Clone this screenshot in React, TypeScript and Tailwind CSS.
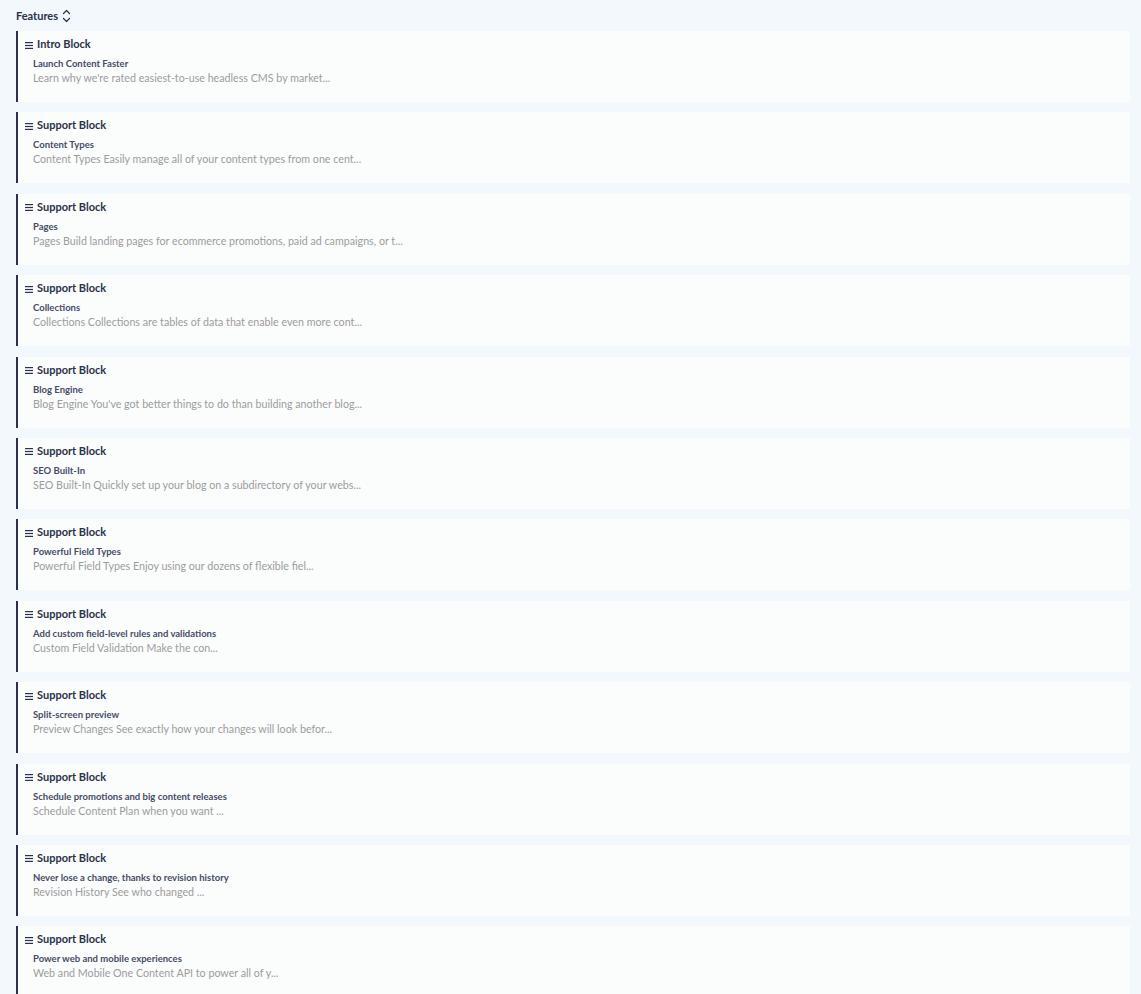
type Block = { kind: string; title: string; body: string };

const blocks: Block[] = [
  { kind: "Intro Block", title: "Launch Content Faster", body: "Learn why we're rated easiest-to-use headless CMS by market..." },
  { kind: "Support Block", title: "Content Types", body: "Content Types Easily manage all of your content types from one cent..." },
  { kind: "Support Block", title: "Pages", body: "Pages Build landing pages for ecommerce promotions, paid ad campaigns, or t..." },
  { kind: "Support Block", title: "Collections", body: "Collections Collections are tables of data that enable even more cont..." },
  { kind: "Support Block", title: "Blog Engine", body: "Blog Engine You've got better things to do than building another blog..." },
  { kind: "Support Block", title: "SEO Built-In", body: "SEO Built-In Quickly set up your blog on a subdirectory of your webs..." },
  { kind: "Support Block", title: "Powerful Field Types", body: "Powerful Field Types Enjoy using our dozens of flexible fiel..." },
  { kind: "Support Block", title: "Add custom field-level rules and validations", body: "Custom Field Validation Make the con..." },
  { kind: "Support Block", title: "Split-screen preview", body: "Preview Changes See exactly how your changes will look befor..." },
  { kind: "Support Block", title: "Schedule promotions and big content releases", body: "Schedule Content Plan when you want ..." },
  { kind: "Support Block", title: "Never lose a change, thanks to revision history", body: "Revision History See who changed ..." },
  { kind: "Support Block", title: "Power web and mobile experiences", body: "Web and Mobile One Content API to power all of y..." },
];

function DragHandle() {
  return (
    <svg width="8" height="7" viewBox="0 0 8 7" className="mr-[4px] mt-[2px] shrink-0">
      <rect x="0" y="0" width="8" height="1.2" fill="#2b3148" />
      <rect x="0" y="2.9" width="8" height="1.2" fill="#2b3148" />
      <rect x="0" y="5.8" width="8" height="1.2" fill="#2b3148" />
    </svg>
  );
}

function SortToggle() {
  return (
    <svg width="9" height="14" viewBox="0 0 9 14" fill="none" stroke="#2b3148" strokeWidth="1.2" strokeLinecap="round" strokeLinejoin="round">
      <path d="M1.5 4.5 L4.5 1.5 L7.5 4.5" />
      <path d="M1.5 9.5 L4.5 12.5 L7.5 9.5" />
    </svg>
  );
}

export default function App() {
  return (
    <div className="min-h-screen bg-[#f2f8fb] pl-4 pr-[11px] pt-2 text-[#2b3148]" style={{ fontFamily: "Lato, 'Open Sans', sans-serif" }}>
      <div className="flex items-center gap-[4px] h-4 mb-[7px]">
        <span className="text-[11px] font-bold leading-4">Features</span>
        <SortToggle />
      </div>

      <div className="flex flex-col gap-[10.4px]">
        {blocks.map((b, i) => (
          <div key={i} className="h-[71px] bg-[#fbfcfc] border-l-2 border-[#2b3148] pl-[7px] pt-[5px] shrink-0">
            <div className="flex items-center h-4">
              <DragHandle />
              <span className="text-[11px] font-bold leading-4">{b.kind}</span>
            </div>
            <div className="pl-[8px] mt-[5px]">
              <div className="text-[9.5px] font-bold leading-[14px] text-[#464c64]">{b.title}</div>
              <div className="text-[10.7px] leading-[14px] text-[#9c9c9c]">{b.body}</div>
            </div>
          </div>
        ))}
      </div>
    </div>
  );
}
